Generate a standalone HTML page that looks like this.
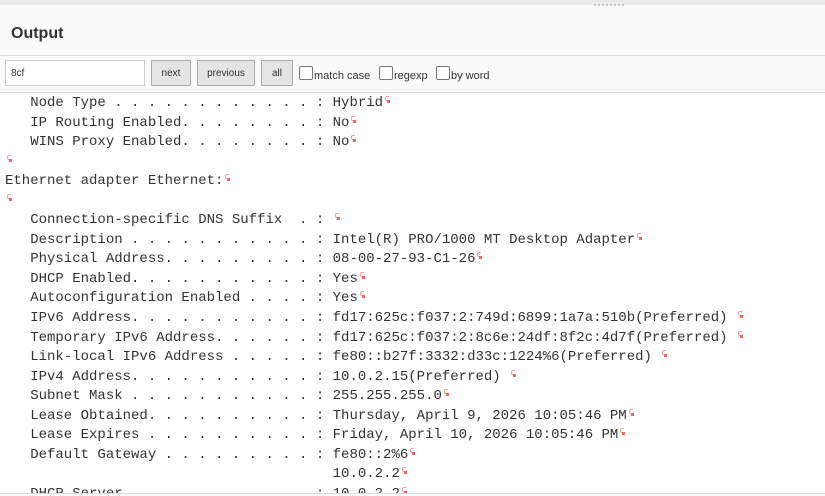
<!DOCTYPE html>
<html><head><meta charset="utf-8"><style>
html,body{margin:0;padding:0;width:825px;height:495px;overflow:hidden;background:#fafafa;font-family:"Liberation Sans",sans-serif}
.top{position:absolute;left:0;top:0;width:825px;height:5px;background:#ebebeb}
.grip{position:absolute;left:594px;top:4px;width:31px;height:2px;background:repeating-linear-gradient(90deg,#c8c8c8 0 2px,transparent 2px 4px)}
.title{position:absolute;left:11px;top:25px;font-size:16px;font-weight:bold;color:#333}
.hl{position:absolute;left:0;width:825px;height:1px;background:#ddd}
.inp{position:absolute;left:5px;top:60px;border:1px solid #ccc;background:#fff;font-size:10px;color:#333;box-sizing:border-box;width:140px;height:26px;padding:0 0 0 5px;line-height:25px}
.btn{position:absolute;top:60px;height:26px;box-sizing:border-box;border:1px solid #aaa;background:#e4e4e4;font-size:10px;color:#333;text-align:center;line-height:26px;border-radius:1px}
.cb{position:absolute;top:66px;font-size:11px;color:#333}
.cb i{display:inline-block;width:12px;height:12px;border:1px solid #777;border-radius:2px;background:#fff;vertical-align:-1px;margin-right:1px}
.out{position:absolute;left:0;top:93px;width:825px;height:400px;background:#fff;overflow:hidden}
pre{margin:0;padding:1px 0 0 5px;font-family:"Liberation Mono",monospace;font-size:14px;line-height:19.55px;color:#333}
.m{display:inline-block;position:relative;width:8px;height:10px;vertical-align:1px}
.m:before{content:"";position:absolute;left:2px;top:1px;width:3px;height:3px;border:1px solid #f2a0a0;border-right:none;border-radius:2px 0 0 2px}
.m:after{content:"";position:absolute;left:4px;top:5px;width:3px;height:3px;background:#e66}
.bot{position:absolute;left:0;top:493px;width:825px;height:2px;background:#fafafa;border-top:1px solid #ddd}
</style></head><body>
<div class="top"></div><div class="grip"></div>
<div class="title">Output</div>
<div class="hl" style="top:55px"></div>
<div class="inp">8cf</div>
<div class="btn" style="left:151px;width:40px">next</div>
<div class="btn" style="left:197px;width:58px">previous</div>
<div class="btn" style="left:261px;width:32px">all</div>
<div class="cb" style="left:299px"><i></i>match case</div>
<div class="cb" style="left:379px"><i></i>regexp</div>
<div class="cb" style="left:436px"><i></i>by word</div>
<div class="hl" style="top:92px"></div>
<div class="out"><pre>   Node Type . . . . . . . . . . . . : Hybrid<span class="m"></span>
   IP Routing Enabled. . . . . . . . : No<span class="m"></span>
   WINS Proxy Enabled. . . . . . . . : No<span class="m"></span>
<span class="m"></span>
Ethernet adapter Ethernet:<span class="m"></span>
<span class="m"></span>
   Connection-specific DNS Suffix  . : <span class="m"></span>
   Description . . . . . . . . . . . : Intel(R) PRO/1000 MT Desktop Adapter<span class="m"></span>
   Physical Address. . . . . . . . . : 08-00-27-93-C1-26<span class="m"></span>
   DHCP Enabled. . . . . . . . . . . : Yes<span class="m"></span>
   Autoconfiguration Enabled . . . . : Yes<span class="m"></span>
   IPv6 Address. . . . . . . . . . . : fd17:625c:f037:2:749d:6899:1a7a:510b(Preferred) <span class="m"></span>
   Temporary IPv6 Address. . . . . . : fd17:625c:f037:2:8c6e:24df:8f2c:4d7f(Preferred) <span class="m"></span>
   Link-local IPv6 Address . . . . . : fe80::b27f:3332:d33c:1224%6(Preferred) <span class="m"></span>
   IPv4 Address. . . . . . . . . . . : 10.0.2.15(Preferred) <span class="m"></span>
   Subnet Mask . . . . . . . . . . . : 255.255.255.0<span class="m"></span>
   Lease Obtained. . . . . . . . . . : Thursday, April 9, 2026 10:05:46 PM<span class="m"></span>
   Lease Expires . . . . . . . . . . : Friday, April 10, 2026 10:05:46 PM<span class="m"></span>
   Default Gateway . . . . . . . . . : fe80::2%6<span class="m"></span>
                                       10.0.2.2<span class="m"></span>
   DHCP Server . . . . . . . . . . . : 10.0.2.2<span class="m"></span>
</pre></div>
<div class="bot"></div>
</body></html>
